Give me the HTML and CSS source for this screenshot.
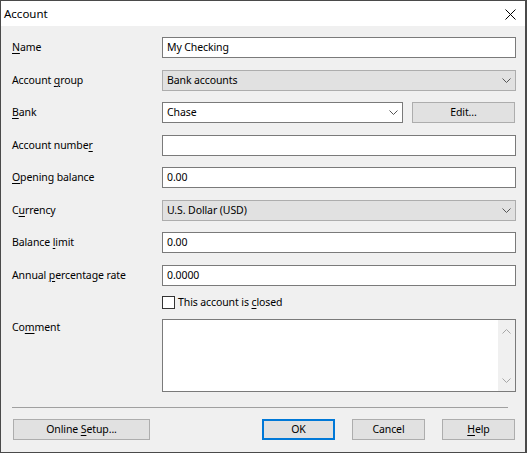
FILE: index.html
```
<!DOCTYPE html>
<html>
<head>
<meta charset="utf-8">
<link rel="stylesheet" href="styles.css">
</head>
<body>
<div class="window">
  <div class="titlebar">
    <span class="title">Account</span>
    <svg class="close" width="11" height="11" viewBox="0 0 11 11"><path d="M0.5 0.5 L10.5 10.5 M10.5 0.5 L0.5 10.5" stroke="#000" stroke-width="1" fill="none"/></svg>
  </div>
  <div class="content">
    <div class="form">
      <div class="lbl"><u>N</u>ame</div>
      <div class="field"><div class="input">My Checking</div></div>

      <div class="lbl">Account <u>g</u>roup</div>
      <div class="field"><div class="combo ro"><span>Bank accounts</span><svg class="chev" width="9" height="5" viewBox="0 0 9 5"><path d="M0.5 0.5 L4.5 4.5 L8.5 0.5" stroke="#555" fill="none"/></svg></div></div>

      <div class="lbl"><u>B</u>ank</div>
      <div class="field bankrow">
        <div class="combo bank"><span>Chase</span><svg class="chev" width="9" height="5" viewBox="0 0 9 5"><path d="M0.5 0.5 L4.5 4.5 L8.5 0.5" stroke="#555" fill="none"/></svg></div>
        <div class="btn edit">Edit...</div>
      </div>

      <div class="lbl">Account numbe<u>r</u></div>
      <div class="field"><div class="input"></div></div>

      <div class="lbl"><u>O</u>pening balance</div>
      <div class="field"><div class="input">0.00</div></div>

      <div class="lbl">C<u>u</u>rrency</div>
      <div class="field"><div class="combo ro"><span>U.S. Dollar (USD)</span><svg class="chev" width="9" height="5" viewBox="0 0 9 5"><path d="M0.5 0.5 L4.5 4.5 L8.5 0.5" stroke="#555" fill="none"/></svg></div></div>

      <div class="lbl">Balance <u>l</u>imit</div>
      <div class="field"><div class="input">0.00</div></div>

      <div class="lbl">Annual <u>p</u>ercentage rate</div>
      <div class="field"><div class="input">0.0000</div></div>

      <div class="lbl"></div>
      <div class="field"><div class="check"><span class="box"></span><span>This account is <u>c</u>losed</span></div></div>

      <div class="lbl top">Co<u>m</u>ment</div>
      <div class="field"><div class="textarea"><div class="text"></div><div class="scroll"><svg width="9" height="5" viewBox="0 0 9 5"><path d="M0.5 4.5 L4.5 0.5 L8.5 4.5" stroke="#a6a6a6" fill="none"/></svg><svg width="9" height="5" viewBox="0 0 9 5"><path d="M0.5 0.5 L4.5 4.5 L8.5 0.5" stroke="#a6a6a6" fill="none"/></svg></div></div></div>
    </div>
    <div class="sep"></div>
    <div class="buttons">
      <div class="btn online">Online <u>S</u>etup...</div>
      <div class="right">
        <div class="btn default">OK</div>
        <div class="btn">Cancel</div>
        <div class="btn"><u>H</u>elp</div>
      </div>
    </div>
  </div>
</div>
</body>
</html>
```
FILE: styles.css
```
* { box-sizing: border-box; }
html, body { margin: 0; padding: 0; }
body {
  font-family: "Segoe UI", "Noto Sans", sans-serif;
  font-size: 10.5px;
  letter-spacing: -0.1px;
  color: #000;
  background: #f0f0f0;
}
.window {
  width: 527px;
  height: 453px;
  border: 1px solid #4a4a4a;
  border-right-width: 2px;
  background: #f0f0f0;
  display: flex;
  flex-direction: column;
}
.titlebar {
  height: 25px;
  background: #fff;
  display: flex;
  align-items: center;
  justify-content: space-between;
  padding: 0 9px 0 3px;
  flex: none;
}
.title { font-size: 11.5px; letter-spacing: 0; line-height: 16px; }
.close { display: block; margin-top: 1px; }
.content {
  padding: 11px 10px 0 11px;
}
.form {
  display: grid;
  grid-template-columns: 150px 354px;
  grid-template-rows: 33px 32px 33px 32px 33px 32px 33px 30px 24px 73px;
}
.lbl {
  line-height: 21px;
  white-space: nowrap;
}
.lbl.top { line-height: 16px; }
u { text-decoration: underline; text-underline-offset: 2px; }
.field { display: flex; align-items: flex-start; }
.input, .combo {
  height: 21px;
  width: 354px;
  border: 1px solid #7a7a7a;
  background: #fff;
  padding: 0 4px;
  line-height: 19px;
  white-space: nowrap;
}
.combo {
  display: flex;
  align-items: center;
  justify-content: space-between;
  padding-right: 4px;
}
.combo.ro {
  background: #e1e1e1;
  border-color: #adadad;
}
.chev { display: block; }
.bankrow { gap: 9px; }
.combo.bank { width: 241px; }
.btn {
  height: 21px;
  border: 1px solid #adadad;
  background: #e1e1e1;
  text-align: center;
  line-height: 19px;
  white-space: nowrap;
}
.btn.edit { width: 103px; }
.check {
  display: flex;
  align-items: center;
  gap: 3px;
  line-height: 14px;
}
.box {
  width: 13px;
  height: 13px;
  border: 1px solid #333;
  background: #fff;
  display: block;
}
.textarea {
  width: 354px;
  height: 73px;
  border: 1px solid #7a7a7a;
  background: #fff;
  display: flex;
}
.textarea .text { flex: 1; }
.scroll {
  width: 17px;
  background: #f0f0f0;
  display: flex;
  flex-direction: column;
  justify-content: space-between;
  align-items: center;
  padding: 9px 0 8px;
}
.scroll svg { display: block; }
.sep {
  width: 496px;
  height: 1px;
  background: #a0a0a0;
  margin-top: 15px;
}
.buttons {
  display: flex;
  margin-top: 11px;
}
.btn.online { width: 137px; margin-left: 1px; }
.right {
  margin-left: auto;
  display: flex;
  gap: 17px;
}
.right .btn { width: 73px; }
.btn.default {
  border: 2px solid #0078d7;
  line-height: 17px;
}
```
